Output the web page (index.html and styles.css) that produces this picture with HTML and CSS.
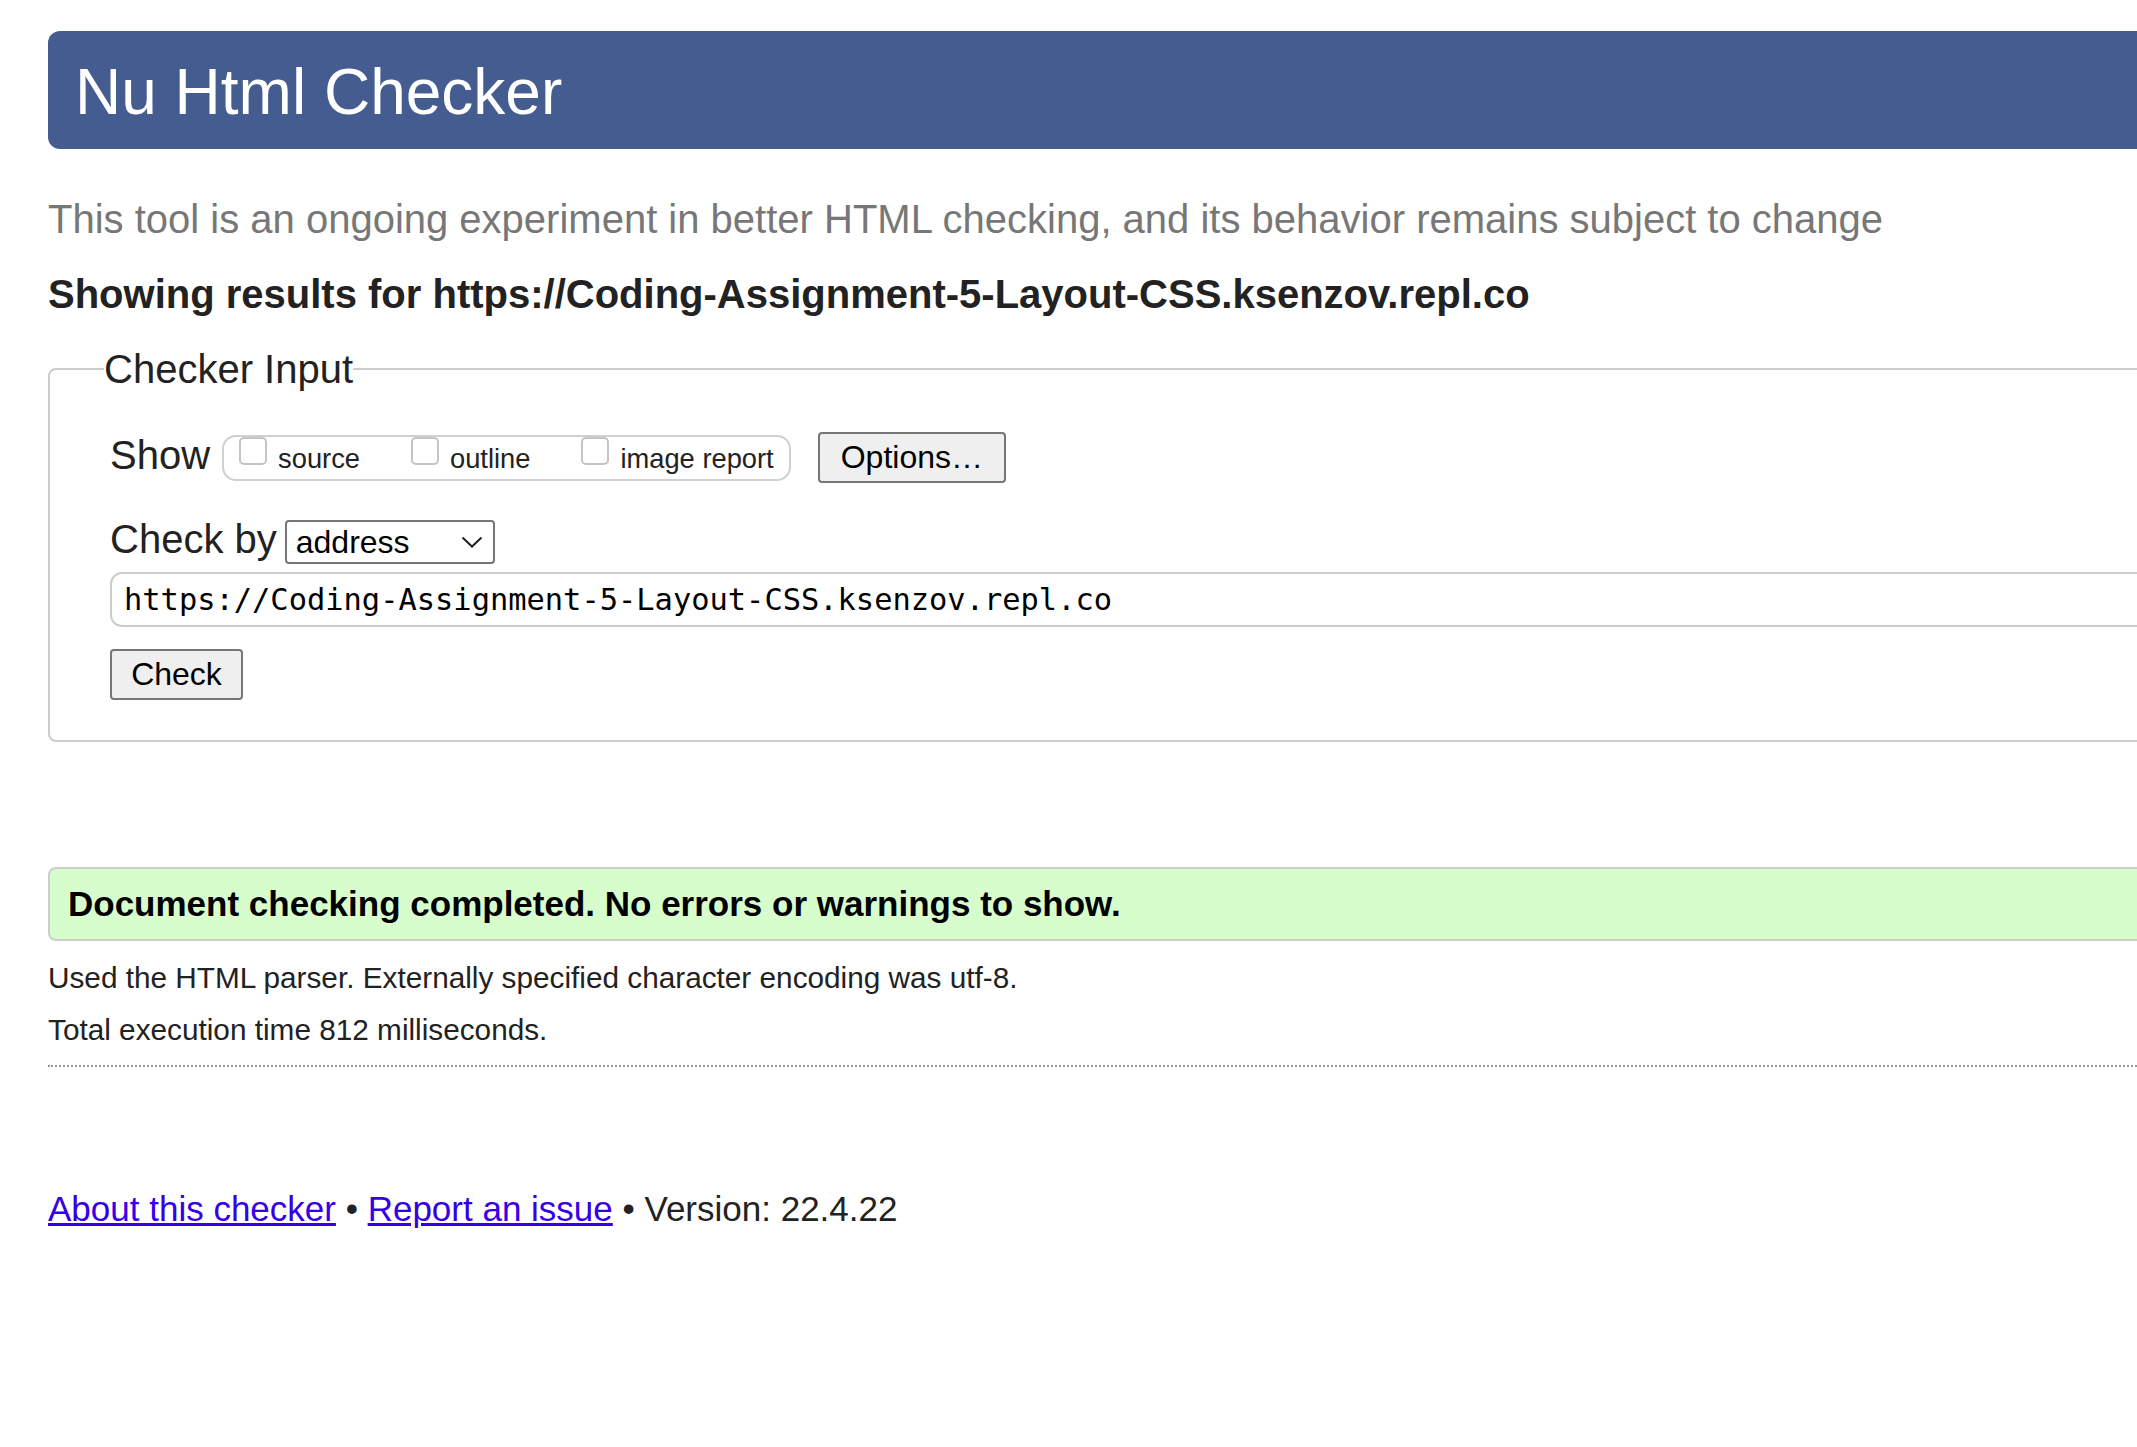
FILE: index.html
```html
<!DOCTYPE html>
<html lang="en">
<head>
<meta charset="utf-8">
<title>Showing results for https://Coding-Assignment-5-Layout-CSS.ksenzov.repl.co - Nu Html Checker</title>
<link rel="stylesheet" href="styles.css">
</head>
<body>
<div class="page">
  <h1 class="banner">Nu Html Checker</h1>
  <p class="intro">This tool is an ongoing experiment in better HTML checking, and its behavior remains subject to change</p>
  <h2 class="results-for">Showing results for https://Coding-Assignment-5-Layout-CSS.ksenzov.repl.co</h2>
  <form class="checker-form">
    <fieldset class="checker-input">
      <legend class="checker-legend">Checker Input</legend>
      <div class="show-row">
        <span class="row-label">Show</span>
        <div class="show-group">
          <label class="opt"><input type="checkbox" class="cb">source</label><label class="opt"><input type="checkbox" class="cb">outline</label><label class="opt"><input type="checkbox" class="cb">image report</label>
        </div>
        <button type="button" class="btn btn-options">Options…</button>
      </div>
      <div class="by-row">
        <span class="row-label by-label">Check by</span>
        <span class="select-wrap">
          <select class="select"><option>address</option></select>
          <svg class="chev" width="22" height="12" viewBox="0 0 22 12" aria-hidden="true"><path d="M1.5 1.5 L11 10.5 L20.5 1.5" fill="none" stroke="#222" stroke-width="2"/></svg>
        </span>
      </div>
      <input type="text" class="url" value="https://Coding-Assignment-5-Layout-CSS.ksenzov.repl.co">
      <button type="button" class="btn btn-check">Check</button>
    </fieldset>
  </form>
  <p class="success">Document checking completed. No errors or warnings to show.</p>
  <p class="details details-first">Used the HTML parser. Externally specified character encoding was utf-8.</p>
  <p class="details">Total execution time 812 milliseconds.</p>
  <hr class="sep">
  <p class="footer"><a href="#" class="flink">About this checker</a> • <a href="#" class="flink">Report an issue</a> • Version: 22.4.22</p>
</div>
</body>
</html>
```
FILE: styles.css
```css
html, body {
  margin: 0;
  background: #fff;
}
body {
  padding: 31px 0 0 48px;
  overflow: hidden;
  font-family: "Liberation Sans", Arial, sans-serif;
  color: #222;
}
.page {
  width: 2200px;
}
.banner {
  margin: 0;
  height: 118px;
  box-sizing: border-box;
  padding: 5px 0 0 27px;
  line-height: 112px;
  font-size: 64px;
  font-weight: normal;
  color: #fff;
  background: #455c91;
  border-radius: 12px 0 0 12px;
}
.intro {
  margin: 47px 0 0;
  font-size: 40px;
  line-height: 46px;
  color: #777;
}
.results-for {
  margin: 29px 0 0;
  font-size: 40px;
  line-height: 46px;
  font-weight: bold;
  color: #222;
}
.checker-form {
  margin: 0;
}
.checker-input {
  margin: 29px 0 0;
  border: 2px solid #ccc;
  border-radius: 8px;
  padding: 0 0 40px 60px;
  min-width: 0;
}
.checker-legend {
  font-size: 40px;
  line-height: 46px;
  padding: 0;
  margin-left: -6px;
  color: #222;
}
.show-row {
  display: flex;
  align-items: center;
  margin-top: 40px;
}
.row-label {
  font-size: 40px;
  line-height: 46px;
  color: #222;
  align-self: flex-start;
}
.show-group {
  margin-left: 12px;
  height: 46px;
  box-sizing: border-box;
  border: 2px solid #d0d0d0;
  border-radius: 14px;
  padding: 0 15px;
  font-size: 27.3px;
  line-height: 31px;
  white-space: nowrap;
  color: #222;
}
.opt {
  margin-left: 51px;
}
.opt:first-child {
  margin-left: 0;
}
.cb {
  -webkit-appearance: none;
  appearance: none;
  width: 28px;
  height: 28px;
  box-sizing: border-box;
  border: 2px solid #c4c4c4;
  border-radius: 5px;
  background: #fff;
  margin: 0 11px 3px 0;
  vertical-align: baseline;
}
.btn {
  box-sizing: border-box;
  height: 51px;
  border: 2px solid #767676;
  border-radius: 4px;
  background: #efefef;
  color: #000;
  font-family: "Liberation Sans", Arial, sans-serif;
  font-size: 32px;
  padding: 0 21px;
}
.btn-options {
  margin-left: 27px;
  width: 188px;
}
.by-row {
  display: flex;
  align-items: flex-start;
  margin-top: 37px;
}
.by-label {
  line-height: 44px;
  margin-top: -3px;
}
.select-wrap {
  position: relative;
  margin-left: 8px;
  display: block;
}
.select {
  -webkit-appearance: none;
  appearance: none;
  display: block;
  width: 210px;
  height: 44px;
  box-sizing: border-box;
  border: 2px solid #767676;
  border-radius: 4px;
  background: #fff;
  color: #000;
  font-family: "Liberation Sans", Arial, sans-serif;
  font-size: 32px;
  padding: 0 0 0 9px;
}
.chev {
  position: absolute;
  left: 176px;
  top: 16px;
  pointer-events: none;
}
.url {
  display: block;
  margin-top: 8px;
  width: 100%;
  height: 55px;
  box-sizing: border-box;
  border: 2px solid #ccc;
  border-radius: 12px;
  padding: 0 0 0 12px;
  font-family: "DejaVu Sans Mono", "Liberation Mono", monospace;
  font-size: 30.4px;
  color: #000;
  background: #fff;
}
.btn-check {
  display: block;
  margin-top: 22px;
  width: 133px;
  padding: 0;
}
.success {
  margin: 125px 0 0;
  height: 74px;
  box-sizing: border-box;
  border: 2px solid #ccc;
  border-radius: 8px;
  background: #d8fdcd;
  padding: 15px 16px 15px 18px;
  font-size: 35px;
  line-height: 40px;
  font-weight: bold;
  color: #000;
}
.details {
  margin: 17px 0 0;
  font-size: 29.75px;
  line-height: 35px;
  color: #222;
}
.details-first {
  margin-top: 19px;
}
.sep {
  margin: 18px 0 0;
  height: 0;
  border: 0;
  border-top: 2px dotted #999;
}
.footer {
  margin: 122px 0 0;
  font-size: 35px;
  line-height: 40px;
  color: #222;
}
.flink {
  color: #3500e8;
  text-decoration: underline;
}
```
